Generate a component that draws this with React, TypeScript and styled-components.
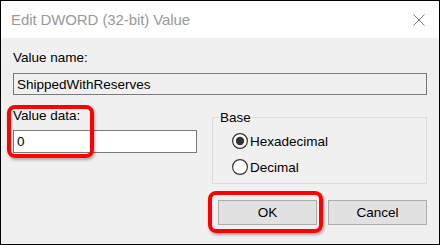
import React from "react";
import styled, { createGlobalStyle } from "styled-components";

const GlobalStyle = createGlobalStyle`
  html, body {
    margin: 0;
    padding: 0;
    background: #ffffff;
  }
  * {
    box-sizing: border-box;
  }
`;

const Window = styled.div`
  width: 440px;
  height: 245px;
  border: 1px solid #000;
  display: flex;
  flex-direction: column;
  font-family: "Liberation Sans", Arial, sans-serif;
  font-size: 13.5px;
  color: #000;
  overflow: hidden;
`;

const TitleBar = styled.div`
  height: 37px;
  flex: none;
  background: #fff;
  display: flex;
  align-items: center;
  justify-content: space-between;
  padding: 0 14px 0 10px;
`;

const Title = styled.span`
  font-size: 15px;
  color: #999999;
  letter-spacing: -0.1px;
`;

const Body = styled.div`
  flex: 1;
  background: #f0f0f0;
  padding: 12px 12px 0 12px;
  display: flex;
  flex-direction: column;
`;

const Label = styled.div`
  line-height: 15px;
`;

const TextBox = styled.div<{ $readOnly?: boolean; $width?: string }>`
  width: ${(p) => p.$width ?? "100%"};
  height: ${(p) => (p.$readOnly ? "22px" : "23px")};
  border: 1px solid #7a7a7a;
  background: ${(p) => (p.$readOnly ? "#f0f0f0" : "#ffffff")};
  display: flex;
  align-items: center;
  padding-left: 3px;
  line-height: 15px;
`;

const NameBox = styled(TextBox)`
  margin-top: 8px;
`;

const Lower = styled.div`
  display: grid;
  grid-template-columns: 184px 1fr;
  column-gap: 15px;
  margin-top: 13px;
  align-items: start;
`;

const DataField = styled.div`
  position: relative;
  display: flex;
  flex-direction: column;
  gap: 7px;
`;

const Highlight = styled.div<{ $top: number; $left: number; $right: number; $bottom: number }>`
  position: absolute;
  top: ${(p) => p.$top}px;
  left: ${(p) => p.$left}px;
  right: ${(p) => p.$right}px;
  bottom: ${(p) => p.$bottom}px;
  border: 4px solid #ff0000;
  border-radius: 8px;
  box-shadow: 1px 2px 3px rgba(0, 0, 0, 0.3);
  pointer-events: none;
`;

const GroupBox = styled.fieldset`
  margin: 2px 0 0 0;
  border: 1px solid #dcdcdc;
  padding: 6px 0 6px 6px;
  min-width: 0;
  display: flex;
  flex-direction: column;
  gap: 6px;
`;

const Legend = styled.legend`
  padding: 0 1px;
  line-height: 15px;
`;

const RadioRow = styled.label`
  display: flex;
  align-items: center;
  height: 20px;
  gap: 2px;
  padding-left: 13px;
  line-height: 15px;
`;

const ButtonRow = styled.div`
  display: flex;
  justify-content: flex-end;
  gap: 11px;
  margin-top: 16px;
`;

const ButtonWrap = styled.div`
  position: relative;
`;

const Button = styled.button`
  width: 99px;
  height: 25px;
  background: #e1e1e1;
  border: 1px solid #adadad;
  font-family: inherit;
  font-size: 13.5px;
  color: #000;
  padding: 0;
`;

const Radio: React.FC<{ checked?: boolean }> = ({ checked }) => (
  <svg width="16" height="16" viewBox="0 0 16 16">
    <circle cx="8" cy="8" r="7.4" fill="#fff" stroke="#333" strokeWidth="1.2" />
    {checked && <circle cx="8" cy="8" r="4.2" fill="#333" />}
  </svg>
);

const CloseIcon = () => (
  <svg width="12" height="12" viewBox="0 0 12 12">
    <path d="M0.5 0.5 L11.5 11.5 M11.5 0.5 L0.5 11.5" stroke="#7a7a7a" strokeWidth="1" />
  </svg>
);

export default function App() {
  return (
    <>
      <GlobalStyle />
      <Window>
        <TitleBar>
          <Title>Edit DWORD (32-bit) Value</Title>
          <CloseIcon />
        </TitleBar>
        <Body>
          <Label>Value name:</Label>
          <NameBox $readOnly>ShippedWithReserves</NameBox>
          <Lower>
            <DataField>
              <Label>Value data:</Label>
              <TextBox>0</TextBox>
              <Highlight $top={-3} $left={-6} $right={103} $bottom={-5} />
            </DataField>
            <GroupBox>
              <Legend>Base</Legend>
              <RadioRow>
                <Radio checked />
                Hexadecimal
              </RadioRow>
              <RadioRow>
                <Radio />
                Decimal
              </RadioRow>
            </GroupBox>
          </Lower>
          <ButtonRow>
            <ButtonWrap>
              <Button>OK</Button>
              <Highlight $top={-9} $left={-10} $right={-6} $bottom={-8} />
            </ButtonWrap>
            <Button>Cancel</Button>
          </ButtonRow>
        </Body>
      </Window>
    </>
  );
}
